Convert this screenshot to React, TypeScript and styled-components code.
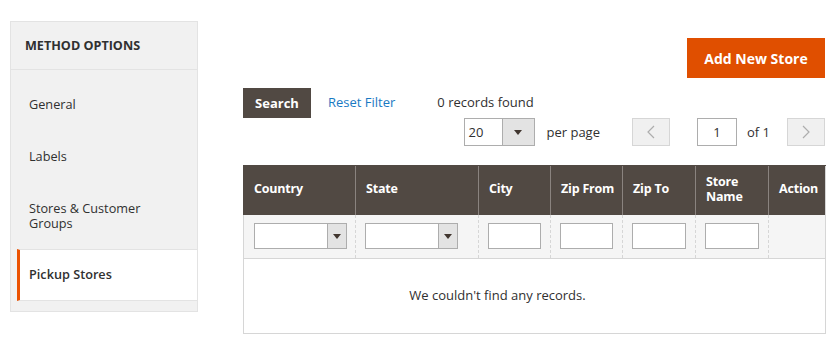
import React from 'react';
import styled, { createGlobalStyle } from 'styled-components';

const GlobalStyle = createGlobalStyle`
  html, body {
    margin: 0;
    padding: 0;
    background: #fff;
  }
  body {
    font-family: 'Open Sans', 'Noto Sans', sans-serif;
    font-size: 13px;
    color: #303030;
  }
`;

const Page = styled.div`
  display: flex;
  align-items: flex-start;
  padding: 21px 11px 0 10px;
  gap: 45px;
`;

const Sidebar = styled.div`
  width: 188px;
  box-sizing: border-box;
  background: #f1f1f1;
  border: 1px solid #e3e3e3;
  padding-bottom: 10px;
`;

const SidebarTitle = styled.div`
  height: 47px;
  display: flex;
  align-items: center;
  padding-left: 14px;
  border-bottom: 1px solid #e3e3e3;
  font-weight: 700;
  font-size: 12.6px;
  color: #303030;
  text-transform: uppercase;
`;

const NavList = styled.div`
  padding: 8px 0 0 6px;
  display: flex;
  flex-direction: column;
`;

const NavItem = styled.div<{ active?: boolean }>`
  padding: ${({ active }) => (active ? '17px 10px 18px 9px' : '19px 10px 18px 12px')};
  line-height: 15px;
  font-size: 12.7px;
  color: #303030;
  font-weight: ${({ active }) => (active ? 600 : 400)};
  background: ${({ active }) => (active ? '#fff' : 'transparent')};
  border-left: ${({ active }) => (active ? '3px solid #eb5202' : 'none')};
  border-top: ${({ active }) => (active ? '1px solid #e3e3e3' : 'none')};
  border-bottom: ${({ active }) => (active ? '1px solid #e3e3e3' : 'none')};
`;

const Main = styled.div`
  width: 582px;
  padding-top: 17px;
  display: flex;
  flex-direction: column;
`;

const TopBar = styled.div`
  display: flex;
  justify-content: flex-end;
`;

const PrimaryButton = styled.button`
  width: 138px;
  height: 40px;
  border: none;
  background: #e04f00;
  color: #fff;
  font-family: inherit;
  font-size: 14px;
  font-weight: 700;
  cursor: pointer;
`;

const ActionsRow = styled.div`
  margin-top: 10px;
  display: flex;
  align-items: center;
  height: 30px;
`;

const DarkButton = styled.button`
  width: 68px;
  height: 30px;
  border: none;
  background: #514943;
  color: #fff;
  font-family: inherit;
  font-size: 13px;
  font-weight: 700;
  padding-bottom: 2px;
`;

const LinkText = styled.span`
  color: #1979c3;
  margin-left: 17px;
  margin-top: -2px;
`;

const Records = styled.span`
  margin-left: 42px;
  margin-top: -2px;
`;

const PagerRow = styled.div`
  display: flex;
  justify-content: flex-end;
  align-items: center;
  height: 28px;
`;

const SelectBox = styled.div<{ w: number; h: number }>`
  width: ${({ w }) => w}px;
  height: ${({ h }) => h}px;
  box-sizing: border-box;
  border: 1px solid #adadad;
  background: #fff;
  display: flex;
`;

const SelectValue = styled.div`
  flex: 1;
  display: flex;
  align-items: center;
  padding-left: 4px;
`;

const SelectArrow = styled.div<{ w: number }>`
  width: ${({ w }) => w}px;
  background: #e3e3e3;
  border-left: 1px solid #adadad;
  display: flex;
  align-items: center;
  justify-content: center;
  &::after {
    content: '';
    border-left: 4px solid transparent;
    border-right: 4px solid transparent;
    border-top: 5px solid #41362f;
  }
`;

const PerPage = styled.span`
  margin: 0 32px 0 12px;
`;

const PageButton = styled.div`
  width: 38px;
  height: 28px;
  box-sizing: border-box;
  border: 1px solid #d6d6d6;
  background: #f0f0f0;
  display: flex;
  align-items: center;
  justify-content: center;
`;

const PageInput = styled.div`
  width: 40px;
  height: 28px;
  box-sizing: border-box;
  border: 1px solid #adadad;
  display: flex;
  align-items: center;
  justify-content: center;
  margin-left: 27px;
`;

const OfText = styled.span`
  margin: 0 17px 0 10px;
`;

const Grid = styled.table`
  margin-top: 19px;
  width: 582px;
  border-collapse: collapse;
  table-layout: fixed;
  border: 1px solid #d6d6d6;
`;

const HeadCell = styled.th<{ w: number }>`
  width: ${({ w }) => w}px;
  height: 49px;
  box-sizing: border-box;
  background: #514943;
  color: #fff;
  font-weight: 700;
  font-size: 12.5px;
  letter-spacing: -0.2px;
  line-height: 15px;
  text-align: left;
  padding: 0 4px 3px 10px;
  border-left: 1px solid #8a837f;
  border-top: 1px solid #514943;
  &:first-child {
    border-left-color: #514943;
  }
`;

const FilterCell = styled.td`
  height: 44px;
  box-sizing: border-box;
  background: #f5f5f5;
  padding: 0 9px 0 9px;
  border-left: 1px dashed #d6d6d6;
  border-bottom: 1px solid #d6d6d6;
  &:first-child {
    border-left: none;
    padding-left: 10px;
  }
`;

const TextInput = styled.div`
  width: 100%;
  height: 26px;
  box-sizing: border-box;
  border: 1px solid #adadad;
  background: #fff;
`;

const EmptyCell = styled.td`
  height: 72px;
  text-align: center;
  padding: 0 74px 2px 0;
  font-size: 13px;
  background: #fff;
`;

const Chevron = ({ dir }: { dir: 'left' | 'right' }) => (
  <svg width="8" height="14" viewBox="0 0 8 14">
    <path
      d={dir === 'left' ? 'M7 1L1 7l6 6' : 'M1 1l6 6-6 6'}
      fill="none"
      stroke="#adadad"
      strokeWidth="1.2"
    />
  </svg>
);

const columns = [
  { label: 'Country', w: 112, kind: 'select' },
  { label: 'State', w: 123, kind: 'select' },
  { label: 'City', w: 72, kind: 'input' },
  { label: 'Zip From', w: 72, kind: 'input' },
  { label: 'Zip To', w: 73, kind: 'input' },
  { label: 'Store Name', w: 73, kind: 'input' },
  { label: 'Action', w: 57, kind: 'none' },
];

const navItems = ['General', 'Labels', 'Stores & Customer Groups', 'Pickup Stores'];

export default function App() {
  return (
    <>
      <GlobalStyle />
      <Page>
        <Sidebar>
          <SidebarTitle>Method Options</SidebarTitle>
          <NavList>
            {navItems.map((item) => (
              <NavItem key={item} active={item === 'Pickup Stores'}>
                {item}
              </NavItem>
            ))}
          </NavList>
        </Sidebar>
        <Main>
          <TopBar>
            <PrimaryButton>Add New Store</PrimaryButton>
          </TopBar>
          <ActionsRow>
            <DarkButton>Search</DarkButton>
            <LinkText>Reset Filter</LinkText>
            <Records>0 records found</Records>
          </ActionsRow>
          <PagerRow>
            <SelectBox w={71} h={28}>
              <SelectValue>20</SelectValue>
              <SelectArrow w={31} />
            </SelectBox>
            <PerPage>per page</PerPage>
            <PageButton>
              <Chevron dir="left" />
            </PageButton>
            <PageInput>1</PageInput>
            <OfText>of 1</OfText>
            <PageButton>
              <Chevron dir="right" />
            </PageButton>
          </PagerRow>
          <Grid>
            <thead>
              <tr>
                {columns.map((c) => (
                  <HeadCell key={c.label} w={c.w}>
                    {c.label}
                  </HeadCell>
                ))}
              </tr>
            </thead>
            <tbody>
              <tr>
                {columns.map((c) => (
                  <FilterCell key={c.label}>
                    {c.kind === 'select' && (
                      <SelectBox w={93} h={26}>
                        <SelectValue />
                        <SelectArrow w={18} />
                      </SelectBox>
                    )}
                    {c.kind === 'input' && <TextInput />}
                  </FilterCell>
                ))}
              </tr>
              <tr>
                <EmptyCell colSpan={7}>We couldn't find any records.</EmptyCell>
              </tr>
            </tbody>
          </Grid>
        </Main>
      </Page>
    </>
  );
}
